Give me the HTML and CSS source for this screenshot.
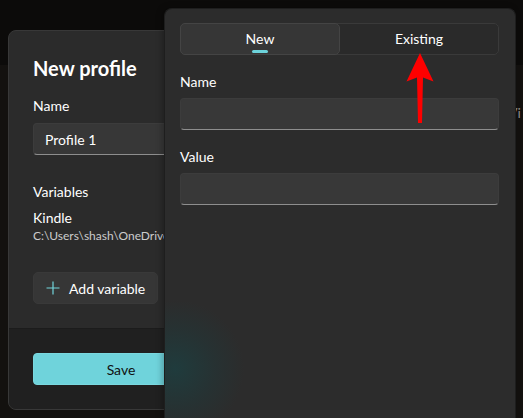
FILE: index.html
```html
<!DOCTYPE html>
<html lang="en">
<head>
<meta charset="utf-8">
<title>New profile</title>
<link rel="stylesheet" href="styles.css">
</head>
<body>
<div class="desk">
  <div class="desk-band"></div>
  <span class="desk-text">Vi</span>

  <section class="dialog">
    <div class="dialog-body">
      <h1 class="title">New profile</h1>
      <label class="label">Name</label>
      <div class="input"><span class="input-text">Profile 1</span></div>
      <div class="label section">Variables</div>
      <div class="var-name">Kindle</div>
      <div class="var-path">C:\Users\shash\OneDrive\Documents\Kindle</div>
      <button class="btn-add">
        <svg class="plus" viewBox="0 0 14 14" width="14" height="14"><path d="M7 0.5V13.5M0.5 7H13.5" stroke="#72d5dc" stroke-width="1.2" fill="none"/></svg>
        <span>Add variable</span>
      </button>
    </div>
    <div class="dialog-footer">
      <button class="btn-save">Save</button>
    </div>
  </section>

  <section class="flyout">
    <div class="glow"></div>
    <div class="segmented">
      <div class="seg seg-active">New<span class="seg-ind"></span></div>
      <div class="seg">Existing</div>
    </div>
    <div class="label fl-label">Name</div>
    <div class="input fl-input"></div>
    <div class="label fl-label2">Value</div>
    <div class="input fl-input"></div>
  </section>

  <svg class="arrow" viewBox="0 0 40 85" width="40" height="85">
    <polygon points="20,8 33.5,36.5 23,32.5 22,78 18,78 17,32.5 6.5,36.5" fill="#ff0000"/>
  </svg>
</div>
</body>
</html>
```

FILE: styles.css
```css
* { box-sizing: border-box; }
html, body {
  margin: 0;
  padding: 0;
  width: 523px;
  height: 418px;
  overflow: hidden;
  background: #0c0b0a;
  font-family: "Lato", "Noto Sans", sans-serif;
  color: #ffffff;
}
.desk {
  position: relative;
  width: 523px;
  height: 418px;
  overflow: hidden;
}
.desk-band {
  position: absolute;
  left: 0;
  right: 0;
  top: 65px;
  bottom: 0;
  background: #13110f;
}
.desk-text {
  position: absolute;
  left: 508px;
  top: 104px;
  font-size: 14px;
  color: #8c8a88;
}
.dialog {
  position: absolute;
  left: 8px;
  top: 30px;
  width: 420px;
  height: 380px;
  background: #2b2b2b;
  border: 1px solid #383838;
  border-radius: 8px;
  overflow: hidden;
  display: flex;
  flex-direction: column;
}
.dialog-body {
  padding: 23px 24px 0;
  display: flex;
  flex-direction: column;
  align-items: flex-start;
  flex: 1;
}
.title {
  margin: 0;
  font-size: 20px;
  line-height: 28px;
  font-weight: 700;
  color: #ffffff;
}
.label {
  display: block;
  font-size: 14px;
  line-height: 20px;
  color: #ffffff;
}
.dialog-body .label { margin-top: 14px; }
.dialog-body .label.section { margin-top: 27px; }
.input {
  height: 32px;
  background: #373737;
  border: 1px solid #3c3c3c;
  border-bottom: 1px solid #8e8e8e;
  border-radius: 4px;
  display: flex;
  align-items: center;
}
.dialog-body .input {
  margin-top: 7px;
  width: 260px;
  padding: 0 11px;
}
.input-text { font-size: 14px; color: #ffffff; }
.var-name {
  margin-top: 6px;
  font-size: 14px;
  line-height: 20px;
}
.var-path {
  font-size: 12px;
  line-height: 16px;
  color: #cccccc;
  white-space: nowrap;
}
.btn-add {
  margin-top: 28px;
  height: 32px;
  width: 125px;
  background: #363636;
  border: 1px solid #393939;
  border-radius: 5px;
  display: flex;
  align-items: center;
  gap: 9px;
  padding: 0 0 0 12px;
  font-family: inherit;
  font-size: 14px;
  color: #ffffff;
  white-space: nowrap;
}
.plus { flex: none; }
.dialog-footer {
  background: #202020;
  border-top: 1px solid #1c1c1c;
  padding: 24px 24px 24px;
}
.btn-save {
  width: 176px;
  height: 32px;
  background: #6fd3db;
  border: 1px solid #7ad8df;
  border-radius: 4px;
  font-family: inherit;
  font-size: 14px;
  color: #111111;
}
.flyout {
  position: absolute;
  left: 164px;
  top: 8px;
  width: 352px;
  height: 420px;
  background: #2c2c2c;
  border: 1px solid #1e1e1e;
  border-bottom: none;
  border-radius: 8px 8px 0 0;
  padding: 14px 16px 0 15px;
  display: flex;
  flex-direction: column;
  overflow: hidden;
  box-shadow: -2px 0 6px rgba(0,0,0,0.25);
}
.glow {
  position: absolute;
  left: -60px;
  top: 290px;
  width: 140px;
  height: 140px;
  background: radial-gradient(circle at center, rgba(26,66,68,0.7) 0%, rgba(30,58,60,0.4) 40%, rgba(44,44,44,0) 70%);
  pointer-events: none;
}
.segmented {
  position: relative;
  display: flex;
  height: 32px;
  border: 1px solid #3a3a3a;
  border-radius: 5px;
  background: #2a2a2a;
}
.seg {
  flex: 1;
  display: flex;
  align-items: center;
  justify-content: center;
  font-size: 14px;
  color: #ffffff;
  position: relative;
  padding-bottom: 2px;
}
.seg-active {
  margin: -1px 0 -1px -1px;
  background: #363636;
  border: 1px solid #444444;
  border-radius: 5px;
}
.seg-ind {
  position: absolute;
  bottom: 1px;
  left: 50%;
  margin-left: -8px;
  width: 16px;
  height: 3px;
  border-radius: 2px;
  background: #6dd3db;
}
.fl-label { margin-top: 17px; }
.fl-label2 { margin-top: 17px; }
.fl-input {
  margin-top: 6px;
  width: 319px;
  background: #383838;
  position: relative;
}
.arrow {
  position: absolute;
  left: 400px;
  top: 45px;
}
```
